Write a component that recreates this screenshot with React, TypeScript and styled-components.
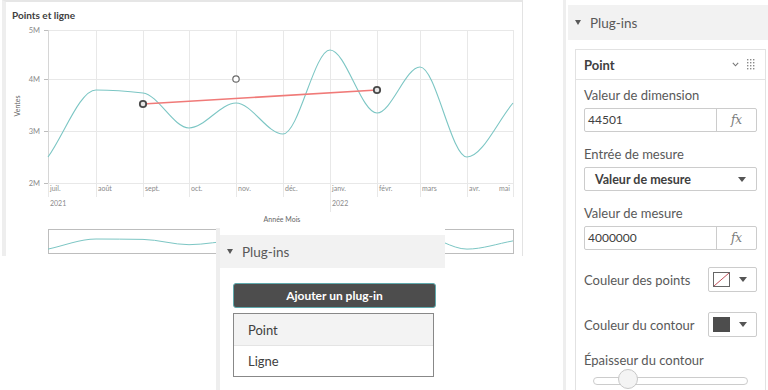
import React from 'react';
import styled, { createGlobalStyle } from 'styled-components';

const GlobalStyle = createGlobalStyle`
  html, body {
    margin: 0;
    padding: 0;
    background: #ffffff;
    font-family: Lato, "Open Sans", sans-serif;
  }
`;

// Page canvas: three screen captures laid side by side
const Page = styled.div`
  position: relative;
  width: 768px;
  height: 390px;
  overflow: hidden;
  display: flex;
  justify-content: space-between;
  align-items: flex-start;
`;

/* ---------- chart panel ---------- */

const ChartPanel = styled.div`
  margin-left: 2px;
  width: 521px;
  height: 256px;
  box-sizing: border-box;
  border-left: 4px solid #eeeeee;
  border-top: 2px solid #e6e6e6;
  border-right: 1px solid #e3e3e3;
  display: flex;
  flex-direction: column;
`;

const ChartTitle = styled.div`
  height: 24px;
  box-sizing: border-box;
  padding: 2px 0 0 6px;
  line-height: 22px;
  font-size: 10px;
  font-weight: 700;
  color: #404040;
`;

const ChartSvg = styled.svg`
  display: block;
  font-family: Lato, sans-serif;
`;

/* ---------- right property panel ---------- */

const SidePanel = styled.div`
  width: 205px;
  height: 390px;
  box-sizing: border-box;
  border-left: 3px solid #eeeeee;
  padding: 5px 0 0 2px;
  display: flex;
  flex-direction: column;
`;

const SectionHeader = styled.div<{ $height: number }>`
  height: ${(p) => p.$height}px;
  background: #f2f2f2;
  display: flex;
  align-items: center;
  gap: 9px;
  padding-left: 7px;
  font-size: 13.5px;
  color: #595959;
`;

const Caret = styled.span`
  width: 0;
  height: 0;
  border-left: 3.5px solid transparent;
  border-right: 3.5px solid transparent;
  border-top: 5px solid #595959;
`;

const Card = styled.div`
  margin: 9px 2px 0 7px;
  flex: 1;
  border: 1px solid #e2e2e2;
  border-bottom: none;
`;

const CardHeader = styled.div`
  height: 29px;
  border-bottom: 1px solid #e2e2e2;
  display: flex;
  align-items: center;
  padding: 0 10px 0 8px;
  font-size: 13px;
  font-weight: 700;
  color: #404040;
`;

const CardTitle = styled.span`
  flex: 1;
`;

const CardBody = styled.div`
  padding: 6px 8px 0 8px;
  display: flex;
  flex-direction: column;
`;

const FieldStack = styled.div`
  display: flex;
  flex-direction: column;
  gap: 13px;
`;

const Field = styled.div`
  display: flex;
  flex-direction: column;
  gap: 4px;
`;

const Label = styled.div`
  height: 18px;
  line-height: 18px;
  font-size: 13px;
  color: #595959;
  white-space: nowrap;
`;

const InputBox = styled.div`
  height: 24px;
  box-sizing: border-box;
  border: 1px solid #cccccc;
  border-radius: 2px;
  display: flex;
  align-items: stretch;
`;

const InputText = styled.div`
  flex: 1;
  padding-left: 3px;
  font-size: 12px;
  line-height: 22px;
  color: #404040;
`;

const FxButton = styled.div`
  width: 39px;
  border-left: 1px solid #cccccc;
  display: flex;
  align-items: center;
  justify-content: center;
  font-family: "DejaVu Serif", "Liberation Serif", serif;
  font-style: italic;
  font-size: 12px;
  color: #7a7a7a;
`;

const SelectBox = styled.div`
  height: 24px;
  box-sizing: border-box;
  border: 1px solid #cccccc;
  border-radius: 2px;
  display: flex;
  align-items: center;
  padding: 0 10px 0 10px;
  font-size: 12.5px;
  font-weight: 700;
  color: #404040;
`;

const SelectText = styled.span`
  flex: 1;
`;

const DownArrow = styled.span`
  width: 0;
  height: 0;
  border-left: 4px solid transparent;
  border-right: 4px solid transparent;
  border-top: 5px solid #555555;
`;

const ColorRow = styled.div<{ $top: number }>`
  margin-top: ${(p) => p.$top}px;
  height: 25px;
  display: flex;
  align-items: center;
  justify-content: space-between;
`;

const ColorButton = styled.div`
  width: 49px;
  height: 25px;
  box-sizing: border-box;
  border: 1px solid #cccccc;
  border-radius: 2px;
  display: flex;
  align-items: center;
  justify-content: space-between;
  padding: 0 9px 0 4px;
`;

const Swatch = styled.div<{ $fill?: string }>`
  width: 17px;
  height: 15px;
  box-sizing: border-box;
  border: 1px solid ${(p) => (p.$fill ? p.$fill : '#666666')};
  background: ${(p) => p.$fill || '#ffffff'};
  display: flex;
`;

const SliderLabel = styled(Label)`
  margin-top: 14px;
`;

const SliderTrack = styled.div`
  position: relative;
  margin: 8px 9px 0 9px;
  height: 6px;
  border: 1px solid #cccccc;
  border-radius: 4px;
  background: #ffffff;
`;

const SliderThumb = styled.div`
  position: absolute;
  left: 24px;
  top: -9px;
  width: 20px;
  height: 20px;
  box-sizing: border-box;
  border-radius: 50%;
  border: 1px solid #c8c8c8;
  background: #f4f4f4;
`;

/* ---------- plug-ins overlay capture ---------- */

const PluginOverlay = styled.div`
  position: absolute;
  left: 216px;
  top: 228px;
  width: 229px;
  height: 162px;
  box-sizing: border-box;
  background: #ffffff;
  border-left: 4px solid #eeeeee;
  padding-top: 7px;
`;

const OverlayBody = styled.div`
  padding: 15px 0 0 13px;
  display: flex;
  flex-direction: column;
  gap: 5px;
`;

const AddButton = styled.div`
  width: 203px;
  height: 25px;
  box-sizing: border-box;
  border: 1px solid #5fa9ad;
  border-radius: 3px;
  background: #4d4d4d;
  color: #ffffff;
  font-size: 12px;
  font-weight: 700;
  display: flex;
  align-items: center;
  justify-content: center;
`;

const MenuList = styled.div`
  width: 201px;
  box-sizing: border-box;
  border: 1px solid #888888;
`;

const MenuItem = styled.div<{ $active?: boolean }>`
  height: 31px;
  box-sizing: border-box;
  padding-left: 14px;
  display: flex;
  align-items: center;
  font-size: 13px;
  color: #404040;
  background: ${(p) => (p.$active ? '#f3f3f3' : '#ffffff')};
  & + & {
    border-top: 1px solid #e4e4e4;
  }
`;

/* ---------- chart data ---------- */

type Pt = [number, number];

// monotone cubic interpolation (no overshoot between points)
function monotonePath(pts: Pt[]): string {
  const n = pts.length;
  const dx: number[] = [];
  const s: number[] = [];
  for (let i = 0; i < n - 1; i++) {
    dx.push(pts[i + 1][0] - pts[i][0]);
    s.push((pts[i + 1][1] - pts[i][1]) / dx[i]);
  }
  const m: number[] = [s[0]];
  for (let i = 1; i < n - 1; i++) {
    if (s[i - 1] * s[i] <= 0) m.push(0);
    else {
      const w1 = 2 * dx[i] + dx[i - 1];
      const w2 = dx[i] + 2 * dx[i - 1];
      m.push((w1 + w2) / (w1 / s[i - 1] + w2 / s[i]));
    }
  }
  m.push(s[n - 2]);
  let d = `M${pts[0][0]},${pts[0][1]}`;
  for (let i = 0; i < n - 1; i++) {
    const h = dx[i] / 3;
    const c1x = pts[i][0] + h;
    const c1y = pts[i][1] + m[i] * h;
    const c2x = pts[i + 1][0] - h;
    const c2y = pts[i + 1][1] - m[i + 1] * h;
    d += ` C${c1x.toFixed(1)},${c1y.toFixed(1)} ${c2x.toFixed(1)},${c2y.toFixed(1)} ${pts[i + 1][0]},${pts[i + 1][1]}`;
  }
  return d;
}

const months = [
  { x: 48, label: 'juil.' },
  { x: 96, label: 'août' },
  { x: 143, label: 'sept.' },
  { x: 189, label: 'oct.' },
  { x: 236, label: 'nov.' },
  { x: 283, label: 'déc.' },
  { x: 330, label: 'janv.' },
  { x: 377, label: 'févr.' },
  { x: 420, label: 'mars' },
  { x: 467, label: 'avr.' },
  { x: 513, label: 'mai' },
];

const values = [157, 90, 93, 128, 103, 134, 50, 113, 67, 157, 103];

const mainPts: Pt[] = months.map((m, i) => [m.x, values[i]]);
const miniPts: Pt[] = months.map((m, i) => [m.x, +(225.5 + values[i] * 0.15).toFixed(1)]);

const yTicks = [
  { y: 30, label: '5M' },
  { y: 79, label: '4M' },
  { y: 131, label: '3M' },
  { y: 183, label: '2M' },
];

function Chart() {
  return (
    <ChartSvg width={516} height={230} viewBox="6 26 516 230">
      {yTicks.map((t) => (
        <g key={t.label}>
          <line x1={48} x2={513} y1={t.y + 0.5} y2={t.y + 0.5} stroke="#e8e8e8" />
          <line x1={44} x2={48} y1={t.y + 0.5} y2={t.y + 0.5} stroke="#bdbdbd" />
          <text x={40} y={t.y + 3} fontSize={7.5} fill="#8a8a8a" textAnchor="end">
            {t.label}
          </text>
        </g>
      ))}
      {months.map((m, i) => (
        <g key={m.label}>
          <line
            x1={m.x + 0.5}
            x2={m.x + 0.5}
            y1={30}
            y2={m.label === 'janv.' ? 212 : 197}
            stroke="#e8e8e8"
          />
          <text
            x={i === months.length - 1 ? 510 : m.x + 2}
            y={191}
            fontSize={7}
            fill="#8a8a8a"
            textAnchor={i === months.length - 1 ? 'end' : 'start'}
          >
            {m.label}
          </text>
        </g>
      ))}
      <line x1={48.5} x2={48.5} y1={30} y2={183} stroke="#d6d6d6" />
      <text x={50} y={206} fontSize={7} fill="#8a8a8a">2021</text>
      <text x={332} y={206} fontSize={7} fill="#8a8a8a">2022</text>
      <text x={282} y={222} fontSize={7} fill="#666666" textAnchor="middle">Année Mois</text>
      <text
        x={20}
        y={106}
        fontSize={7}
        fill="#666666"
        textAnchor="middle"
        transform="rotate(-90 20 106)"
      >
        Ventes
      </text>

      <path d={monotonePath(mainPts)} fill="none" stroke="#7cc6c4" strokeWidth={1.1} />
      <line x1={143} y1={104} x2={377} y2={90} stroke="#f07a78" strokeWidth={1.6} />
      <circle cx={236} cy={79} r={3.2} fill="#ffffff" stroke="#6a6a6a" strokeWidth={1.2} />
      <circle cx={143} cy={104} r={3.2} fill="#e6e6e6" stroke="#4a4a4a" strokeWidth={1.8} />
      <circle cx={377} cy={90} r={3.2} fill="#e6e6e6" stroke="#4a4a4a" strokeWidth={1.8} />

      <rect x={48.5} y={229.5} width={465} height={24} fill="#ffffff" stroke="#bdbdbd" />
      <path d={monotonePath(miniPts)} fill="none" stroke="#7cc6c4" strokeWidth={1} />
    </ChartSvg>
  );
}

function ChevronDown() {
  return (
    <svg width="7" height="5" viewBox="0 0 7 5" style={{ marginRight: 8 }}>
      <path d="M0.8 0.8 L3.5 3.8 L6.2 0.8" fill="none" stroke="#777" strokeWidth="1.1" />
    </svg>
  );
}

function DragDots() {
  const dots = [];
  for (let r = 0; r < 4; r++) {
    for (let c = 0; c < 3; c++) {
      dots.push(<rect key={`${r}-${c}`} x={c * 3} y={r * 3} width={1.4} height={1.4} fill="#8a8a8a" />);
    }
  }
  return (
    <svg width="8" height="11" viewBox="0 0 8 11">
      {dots}
    </svg>
  );
}

function NoColor() {
  return (
    <svg width="15" height="13" viewBox="0 0 15 13">
      <line x1="0" y1="13" x2="15" y2="0" stroke="#c0505a" strokeWidth="1" />
    </svg>
  );
}

export default function App() {
  return (
    <>
      <GlobalStyle />
      <Page>
        <ChartPanel>
          <ChartTitle>Points et ligne</ChartTitle>
          <Chart />
        </ChartPanel>

        <SidePanel>
          <SectionHeader $height={35}>
            <Caret />
            Plug-ins
          </SectionHeader>
          <Card>
            <CardHeader>
              <CardTitle>Point</CardTitle>
              <ChevronDown />
              <DragDots />
            </CardHeader>
            <CardBody>
              <FieldStack>
                <Field>
                  <Label>Valeur de dimension</Label>
                  <InputBox>
                    <InputText>44501</InputText>
                    <FxButton>fx</FxButton>
                  </InputBox>
                </Field>
                <Field>
                  <Label>Entrée de mesure</Label>
                  <SelectBox>
                    <SelectText>Valeur de mesure</SelectText>
                    <DownArrow />
                  </SelectBox>
                </Field>
                <Field>
                  <Label>Valeur de mesure</Label>
                  <InputBox>
                    <InputText>4000000</InputText>
                    <FxButton>fx</FxButton>
                  </InputBox>
                </Field>
              </FieldStack>
              <ColorRow $top={17}>
                <Label>Couleur des points</Label>
                <ColorButton>
                  <Swatch>
                    <NoColor />
                  </Swatch>
                  <DownArrow />
                </ColorButton>
              </ColorRow>
              <ColorRow $top={20}>
                <Label>Couleur du contour</Label>
                <ColorButton>
                  <Swatch $fill="#4d4d4d" />
                  <DownArrow />
                </ColorButton>
              </ColorRow>
              <SliderLabel>Épaisseur du contour</SliderLabel>
              <SliderTrack>
                <SliderThumb />
              </SliderTrack>
            </CardBody>
          </Card>
        </SidePanel>

        <PluginOverlay>
          <SectionHeader $height={33}>
            <Caret />
            Plug-ins
          </SectionHeader>
          <OverlayBody>
            <AddButton>Ajouter un plug-in</AddButton>
            <MenuList>
              <MenuItem $active>Point</MenuItem>
              <MenuItem>Ligne</MenuItem>
            </MenuList>
          </OverlayBody>
        </PluginOverlay>
      </Page>
    </>
  );
}
